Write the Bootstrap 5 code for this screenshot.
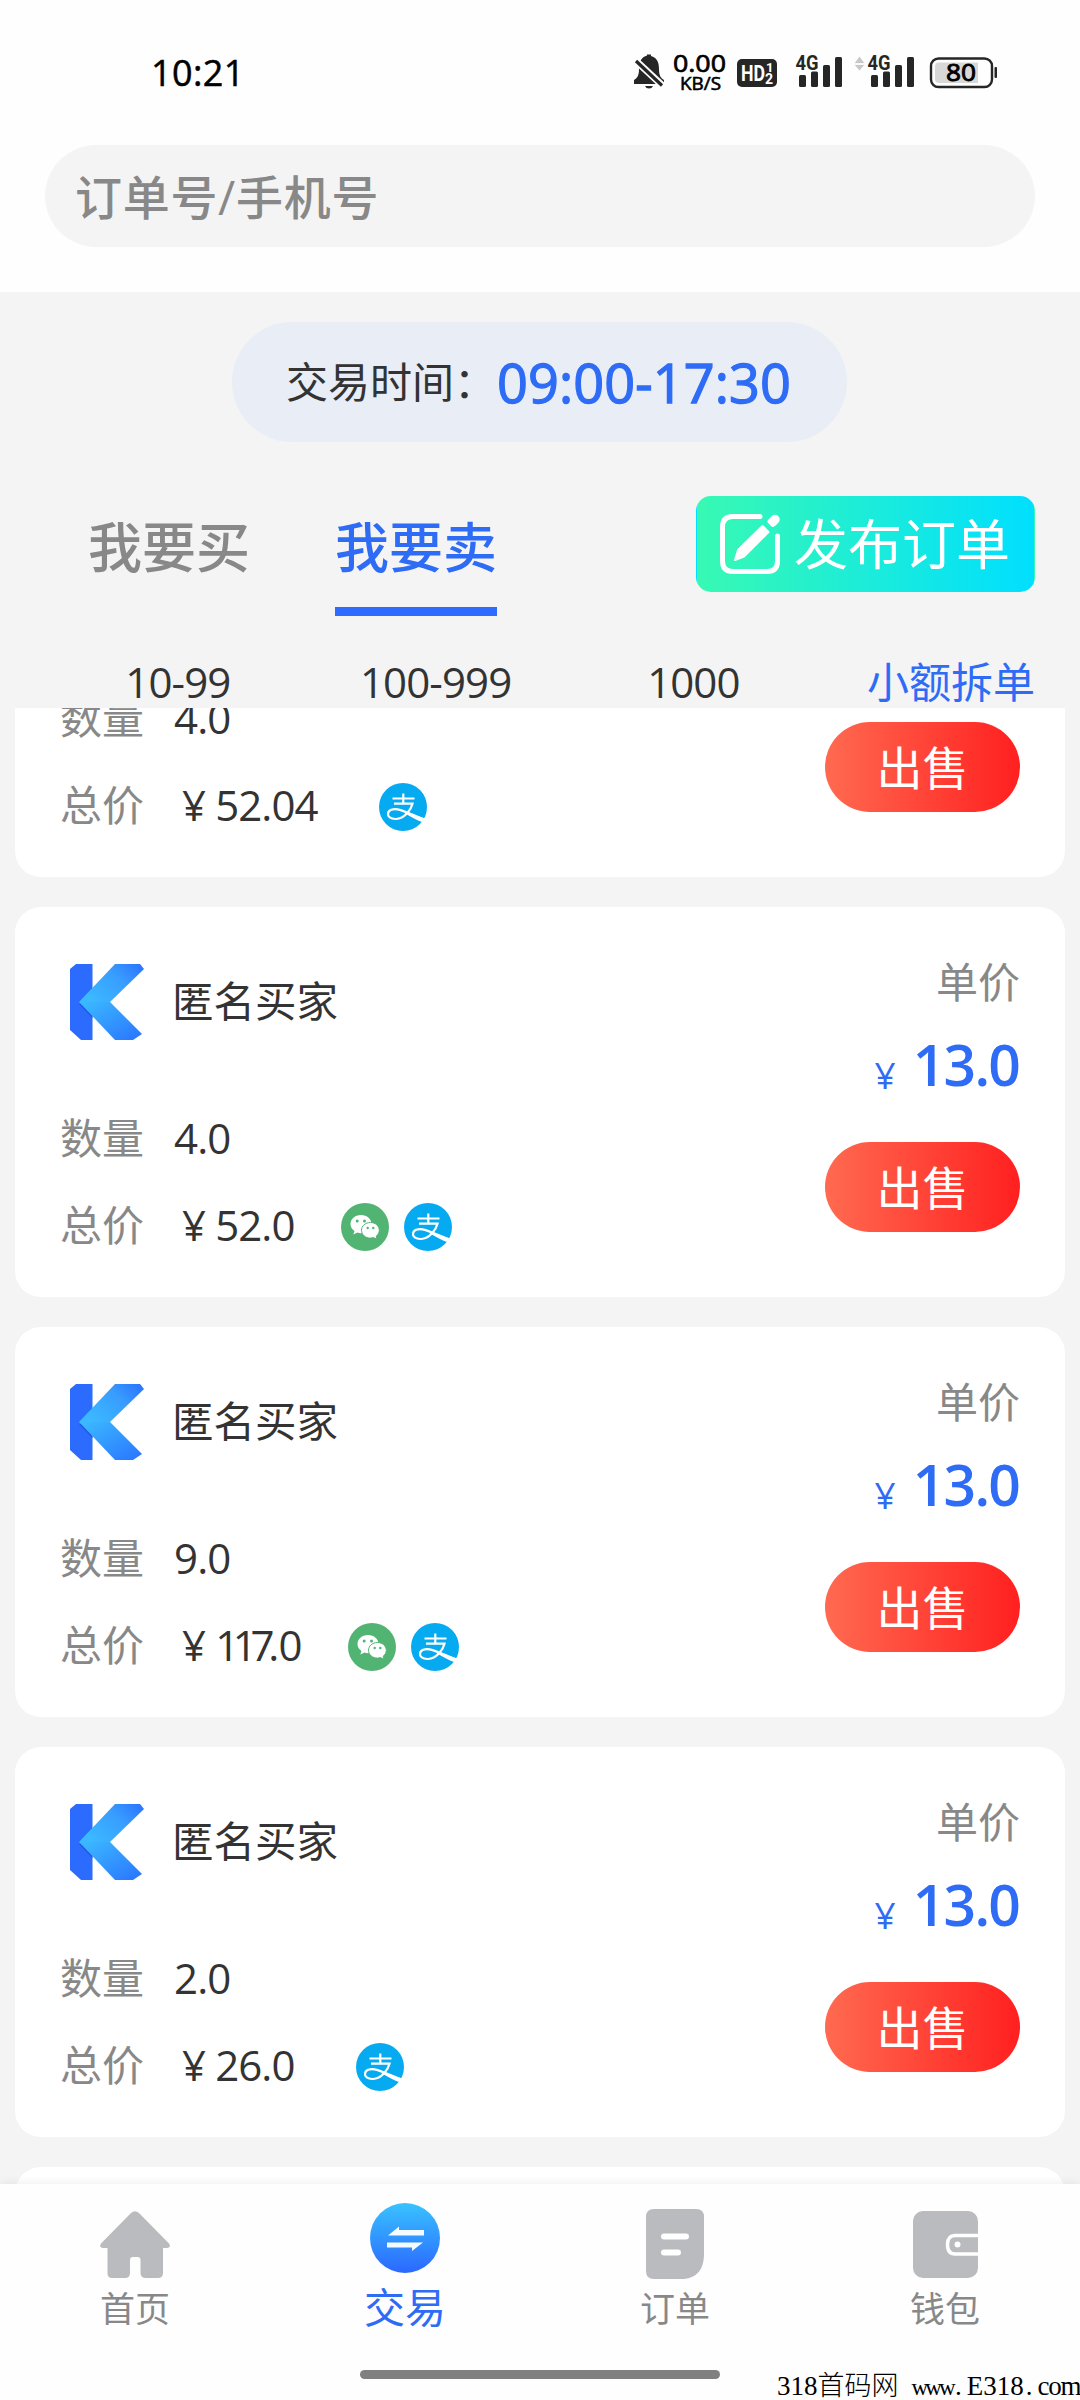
<!DOCTYPE html>
<html lang="zh-CN">
<head>
<meta charset="utf-8">
<meta name="viewport" content="width=device-width, initial-scale=1">
<title>交易</title>
<link rel="stylesheet" href="https://cdn.jsdelivr.net/npm/bootstrap@5.3.0/dist/css/bootstrap.min.css">
<style>
  :root { --blue: #2e6cf6; --ink: #333; --muted: #888; }
  body { font-family: "Open Sans", "Noto Sans CJK SC", sans-serif; color: var(--ink); background: #f4f4f4; font-size: 42px; line-height: 60px; }
  .app { width: 1080px; height: 2400px; overflow: hidden; }
  .c-muted { color: var(--muted); }
  .c-blue { color: var(--blue); }
  .topbar { height: 292px; background: #fefefe; }
  .statusbar { height: 145px; padding: 0 82px 0 151px; }
  .clock { font-size: 36px; line-height: 50px; color: #000; margin-top: 48px; letter-spacing: .4px; -webkit-text-stroke: .5px #000; }
  .status-icons { margin-top: 50px; display: block; }
  .searchbox { height: 102px; margin: 0 45px; padding-left: 30px; background: #f4f4f4; font-size: 47px; font-weight: 500; line-height: 104px; letter-spacing: .7px; }
  .timepill { width: 615px; height: 120px; margin: 30px 0 0 -1px; padding-left: 54px; background: #e8edf6; }
  .timepill .hours { font-size: 54px; letter-spacing: .1px; -webkit-text-stroke: 1.3px var(--blue); margin-left: 1px; }
  .tabs-row { height: 174px; padding: 54px 45px 0 88px; }
  .tab-item { font-size: 54px; font-weight: 500; line-height: 102px; height: 120px; margin-right: 85px; }
  .tab-item.active { border-bottom: 9px solid #2e6cff; color: var(--blue); }
  .publish { width: 339px; height: 96px; padding: 0 0 0 22px; border-radius: 15px; color: #fff; font-size: 54px; line-height: 96px; background: linear-gradient(90deg, #38f9b3, #00dfff); }
  .publish span { margin-left: 13px; }
  .filters { height: 92px; padding-left: 49px; line-height: 62px; padding-top: 35px; }
  .filters .num { letter-spacing: -.9px; }
  .feed { height: 1476px; overflow: hidden; padding: 0 15px; }
  .order { height: 390px; flex: none; margin-bottom: 30px; border-radius: 26px; background: #fff; padding: 48px 45px 0; }
  .order.scrolled { height: 169px; padding-top: 0; border-radius: 0 0 26px 26px; }
  .order.scrolled .qty { margin-top: -20px; }
  .order.scrolled .sell { margin-top: 14px; }
  .klogo { width: 94px; height: 94px; }
  .buyer { margin-left: 18px; font-size: 41.5px; line-height: 92px; }
  .qty { margin-top: 59px; }
  .sum { margin-top: 27px; }
  .amount { letter-spacing: -.9px; }
  .sum .amount { margin-left: 38px; height: 60px; }
  .qty .amount { margin-left: 30px; }
  .tight { letter-spacing: -6.3px; }
  .pay { width: 48px; height: 48px; margin-left: 15px; margin-top: 8px; }
  .pays { margin-left: 31px; }
  .pays.solo { margin-left: 46px; }
  .unit { line-height: 50px; margin-top: 2px; }
  .price { height: 70px; margin-top: 22px; font-size: 57px; font-weight: 600; line-height: 70px; letter-spacing: -1.8px; padding-right: 1px; }
  .price small { font-size: 37px; font-weight: 400; margin-right: 19px; line-height: 91px; }
  .sell { width: 195px; height: 90px; margin-top: 43px; padding: 0; border-radius: 45px; border: 0; color: #fff; font-size: 46px; line-height: 88px; background: linear-gradient(90deg, #ff6a50, #ff2020); }
  .tabbar { height: 216px; background: #fefefe; box-shadow: 0 -2px 8px rgba(0,0,0,.06); position: relative; }
  .tabbar .cell { width: 270px; font-size: 35px; line-height: 46px; color: var(--muted); padding-top: 23px; }
  .tabbar .cell svg { width: 74px; height: 74px; margin-bottom: 5px; }
  .tabbar .cell.on { color: var(--blue); font-size: 41px; padding-top: 17px; }
  .tabbar .cell.on svg { margin-bottom: 9px; }
  .homebar { position: absolute; left: 360px; top: 186px; width: 360px; height: 9px; border-radius: 5px; background: #808080; }
  .site { position: absolute; right: 0; bottom: -4px; width: 303px; font: 300 27px/32px "Liberation Serif", "Noto Sans CJK SC", serif; color: #000; white-space: nowrap; }
  .site .www { font-size: 23px; letter-spacing: -2.8px; margin-left: 13px; }
  .site .dot { letter-spacing: 5px; margin-left: 2px; }
  .site .com { letter-spacing: -1.2px; }
</style>
<script src="https://cdn.jsdelivr.net/npm/bootstrap@5.3.0/dist/js/bootstrap.bundle.min.js"></script>
</head>
<body>
<svg width="0" height="0" class="position-absolute">
  <defs>
    <linearGradient id="kg" x1="0" y1=".6" x2="1" y2="0"><stop offset="0" stop-color="#3bb8ff"/><stop offset=".55" stop-color="#389dff"/><stop offset="1" stop-color="#2a70ff"/></linearGradient>
    <linearGradient id="kg2" x1="0" y1="0" x2="1" y2="1"><stop offset="0" stop-color="#3cbcff"/><stop offset="1" stop-color="#2a74ff"/></linearGradient>
    <linearGradient id="tg" x1="0" y1="0" x2="0" y2="1"><stop offset="0" stop-color="#39c2ff"/><stop offset="1" stop-color="#2b68ff"/></linearGradient>
    <symbol id="k" viewBox="0 0 94 94">
      <path d="M16 9H32.500V85H21L10 75V14Z" fill="#2b6cff"/>
      <path d="M19 49L32.500 63V50Z" fill="#1d55e0"/>
      <path d="M19 47L55 9H80L84 14L50 47Z" fill="url(#kg)"/>
      <path d="M19 47H50L82 79L73 85H55Z" fill="url(#kg2)"/>
    </symbol>
    <symbol id="wx" viewBox="0 0 48 48">
      <circle cx="24" cy="24" r="24" fill="#52b473"/>
      <path d="M20 12C13.800 12 9.500 16 9.500 21c0 3 1.500 5.300 4 7l-1.200 3.600 4.200-2c1 .4 2.300.6 3.500.6 6.200 0 10.500-4.200 10.500-9.200S26.200 12 20 12z" fill="#fff"/>
      <path d="M29.500 19.500c-5.200 0-9 3.500-9 7.800s3.800 7.800 9 7.800c1 0 2-.2 3-.5l3.600 1.700-1-3c2-1.500 3.200-3.600 3.200-6 0-4.300-3.800-7.800-8.800-7.800z" fill="#fff" stroke="#52b473"/>
      <g fill="#52b473"><circle cx="16.200" cy="18" r="1.500"/><circle cx="23.500" cy="18" r="1.500"/><circle cx="26.700" cy="25" r="1.200"/><circle cx="32.300" cy="25" r="1.200"/></g>
    </symbol>
    <symbol id="ali" viewBox="0 0 48 48">
      <circle cx="24" cy="24" r="24" fill="#06aaf0"/>
      <path d="M13.500 15.500H35.500M24.300 10.500V20.500M15 20.700H33.500C32 27 25.500 35.500 17 36C11.500 36.200 8.500 33.500 9 30.500C9.500 27 14 25.500 18.500 26.300C25 27.500 32 31.500 45.500 36.500" fill="none" stroke="#fff" stroke-width="2.200"/>
      <path d="M27 29C34 32.500 40 34 46.800 35.500L44.500 39.500C38 37.500 32 34 26 30.500Z" fill="#fff"/>
    </symbol>
  </defs>
</svg>
<main class="app d-flex flex-column">
  <header class="topbar">
    <div class="statusbar d-flex justify-content-between">
      <div class="clock">10:21</div>
      <svg class="status-icons" width="366" height="46" viewBox="632 50 366 46" font-family="Roboto, sans-serif">
        <g fill="#262626">
          <path d="M649 55.500C657 57 659 62 659 69C659 76 661 78 664 80V84H634V80C637 78 639 76 639 69C639 61 642 57 647 55.500V54.500H651V56Z"/>
          <path d="M645 86H653Q652 88.500 649 88.500Q646 88.500 645 86Z"/>
          <path d="M634 59L663 86" stroke="#fefefe" stroke-width="7"/><path d="M636 61L662 85.500" stroke="#262626" stroke-width="3.200"/>
          <rect x="737" y="59" width="40" height="28" rx="5"/>
          <g id="bars"><rect x="799" y="75" width="7" height="12" rx="1.500"/><rect x="811" y="71.500" width="7" height="15.500" rx="1.500"/><rect x="823" y="65" width="7" height="22" rx="1.500"/><rect x="835" y="57" width="7" height="30" rx="1.500"/></g>
          <use href="#bars" x="72"/>
          <text x="795.500" y="70" font-size="20" font-weight="700" textLength="23" lengthAdjust="spacingAndGlyphs">4G</text>
          <text x="867.500" y="70" font-size="20" font-weight="700" textLength="23" lengthAdjust="spacingAndGlyphs">4G</text>
          <rect x="994.500" y="67" width="2.500" height="11" rx="1"/>
        </g>
        <text x="673" y="72" font-family="Open Sans" font-size="24" font-weight="400" stroke="#000" stroke-width=".7" textLength="53" lengthAdjust="spacingAndGlyphs">0.00</text>
        <text x="680" y="90" font-family="Open Sans" font-size="17.500" font-weight="400" stroke="#000" stroke-width=".6" textLength="41" lengthAdjust="spacingAndGlyphs">KB/S</text>
        <g fill="#fff" font-weight="700"><text x="741" y="81" font-size="21.500" textLength="24" lengthAdjust="spacingAndGlyphs">HD</text><text x="766" y="72" font-size="13">1</text><text x="765" y="84" font-size="14">2</text></g>
        <path d="M854 63.500L859.500 56L865 63.500ZM854 64.500L859.500 71L865 64.500Z" fill="#c8c8c8" stroke="#fefefe" stroke-width=".8"/>
        <rect x="931" y="58.500" width="61" height="28.500" rx="7.500" fill="none" stroke="#262626" stroke-width="2.400"/>
        <path d="M939 62.500H978V83H939Q935 83 935 79V66.500Q935 62.500 939 62.500Z" fill="#d8d8d8"/>
        <text x="946" y="81" font-family="Open Sans" font-size="23.500" font-weight="400" stroke="#000" stroke-width=".9" textLength="30" lengthAdjust="spacingAndGlyphs">80</text>
      </svg>
    </div>
    <div class="searchbox rounded-pill c-muted">订单号/手机号</div>
  </header>

  <div class="timepill rounded-pill align-self-center d-flex align-items-center flex-shrink-0">
    <span>交易时间：</span><span class="hours c-blue">09:00-17:30</span>
  </div>

  <nav class="tabs-row d-flex align-items-start flex-shrink-0">
    <div class="tab-item c-muted">我要买</div>
    <div class="tab-item active">我要卖</div>
    <button class="publish btn d-flex align-items-center ms-auto">
      <svg width="62" height="62" viewBox="0 0 62 62" fill="none" stroke="#fff" stroke-width="5" stroke-linecap="round">
        <path d="M41 3.500H14Q3.500 3.500 3.500 14V48Q3.500 58.500 14 58.500H48Q58.500 58.500 58.500 48V23"/>
        <path d="M16 47L19 37L43.500 13L49.500 19L25 43.500Z" fill="#fff" stroke-width="2" stroke-linejoin="round"/>
        <path d="M53 9.500L56 6.500" stroke-width="9.500"/>
        <path d="M46.500 8.500L53.500 15.500" stroke="#24efc9" stroke-width="1.500"/>
      </svg>
      <span>发布订单</span>
    </button>
  </nav>
  <div class="filters d-flex text-center flex-shrink-0">
    <div class="col-3 num">10-99</div><div class="col-3 num">100-999</div><div class="col-3 num">1000</div><div class="col-3 c-blue">小额拆单</div>
  </div>

  <section class="feed d-flex flex-column flex-shrink-0">
    <article class="order scrolled d-flex justify-content-between">
      <div>
        <div class="qty d-flex"><span class="c-muted">数量</span><span class="amount">4.0</span></div>
        <div class="sum d-flex"><span class="c-muted">总价</span><span class="amount">¥ 52.04</span><span class="pays solo d-flex"><svg class="pay"><use href="#ali"/></svg></span></div>
      </div>
      <button class="sell btn">出售</button>
    </article>
    <article class="order d-flex justify-content-between">
      <div>
        <div class="d-flex"><svg class="klogo"><use href="#k"/></svg><span class="buyer">匿名买家</span></div>
        <div class="qty d-flex"><span class="c-muted">数量</span><span class="amount">4.0</span></div>
        <div class="sum d-flex"><span class="c-muted">总价</span><span class="amount">¥ 52.0</span><span class="pays d-flex"><svg class="pay"><use href="#wx"/></svg><svg class="pay"><use href="#ali"/></svg></span></div>
      </div>
      <div class="d-flex flex-column align-items-end">
        <div class="unit c-muted">单价</div><div class="price c-blue d-flex"><small>¥</small>13.0</div><button class="sell btn">出售</button>
      </div>
    </article>
    <article class="order d-flex justify-content-between">
      <div>
        <div class="d-flex"><svg class="klogo"><use href="#k"/></svg><span class="buyer">匿名买家</span></div>
        <div class="qty d-flex"><span class="c-muted">数量</span><span class="amount">9.0</span></div>
        <div class="sum d-flex"><span class="c-muted">总价</span><span class="amount">¥ <span class="tight">117</span>.0</span><span class="pays d-flex"><svg class="pay"><use href="#wx"/></svg><svg class="pay"><use href="#ali"/></svg></span></div>
      </div>
      <div class="d-flex flex-column align-items-end">
        <div class="unit c-muted">单价</div><div class="price c-blue d-flex"><small>¥</small>13.0</div><button class="sell btn">出售</button>
      </div>
    </article>
    <article class="order d-flex justify-content-between">
      <div>
        <div class="d-flex"><svg class="klogo"><use href="#k"/></svg><span class="buyer">匿名买家</span></div>
        <div class="qty d-flex"><span class="c-muted">数量</span><span class="amount">2.0</span></div>
        <div class="sum d-flex"><span class="c-muted">总价</span><span class="amount">¥ 26.0</span><span class="pays solo d-flex"><svg class="pay"><use href="#ali"/></svg></span></div>
      </div>
      <div class="d-flex flex-column align-items-end">
        <div class="unit c-muted">单价</div><div class="price c-blue d-flex"><small>¥</small>13.0</div><button class="sell btn">出售</button>
      </div>
    </article>
    <article class="order"></article>
  </section>

  <footer class="tabbar d-flex flex-shrink-0 text-center">
    <div class="cell d-flex flex-column align-items-center">
      <svg viewBox="0 0 74 74" fill="#babbbf"><path d="M33 6Q37 2.500 41 6L71 36.500Q73.500 40.500 69 41H65V66Q65 71 60 71H48Q42.500 71 42.500 66V53Q42.500 50 39.500 50H35Q32 50 32 53V66Q32 71 27 71H14Q9.500 71 9.500 66V41H5Q.500 40.500 3 36.500Z"/></svg>
      首页
    </div>
    <div class="cell on d-flex flex-column align-items-center">
      <svg viewBox="0 0 74 74"><circle cx="37" cy="37" r="35" fill="url(#tg)"/><path d="M20 34.500L31 25.500V29H56V34.500ZM55 41.500L44 50V46.500H19V41.500Z" fill="#f2fbff"/></svg>
      交易
    </div>
    <div class="cell d-flex flex-column align-items-center">
      <svg viewBox="0 0 74 74"><path d="M16 2H58Q66 2 66 10V49Q65 70 46 72H16Q8 72 8 64V10Q8 2 16 2Z" fill="#babbbf"/><path d="M26 29.500H48M26 45.500H40" stroke="#fff" stroke-width="6" stroke-linecap="round"/></svg>
      订单
    </div>
    <div class="cell d-flex flex-column align-items-center">
      <svg viewBox="0 0 74 74"><rect x="5" y="4" width="65" height="67" rx="10" fill="#babbbf"/><path d="M70 28.500H47Q39.500 28.500 39.500 37.500Q39.500 47 47 47H70" fill="none" stroke="#fff" stroke-width="3.500"/><circle cx="49.500" cy="37.500" r="3" fill="#fff"/></svg>
      钱包
    </div>
    <div class="homebar"></div>
    <div class="site text-start">318首码网<span class="www">www</span><span class="dot">.</span>E318<span class="dot">.</span><span class="com">com</span></div>
  </footer>
</main>
</body>
</html>
